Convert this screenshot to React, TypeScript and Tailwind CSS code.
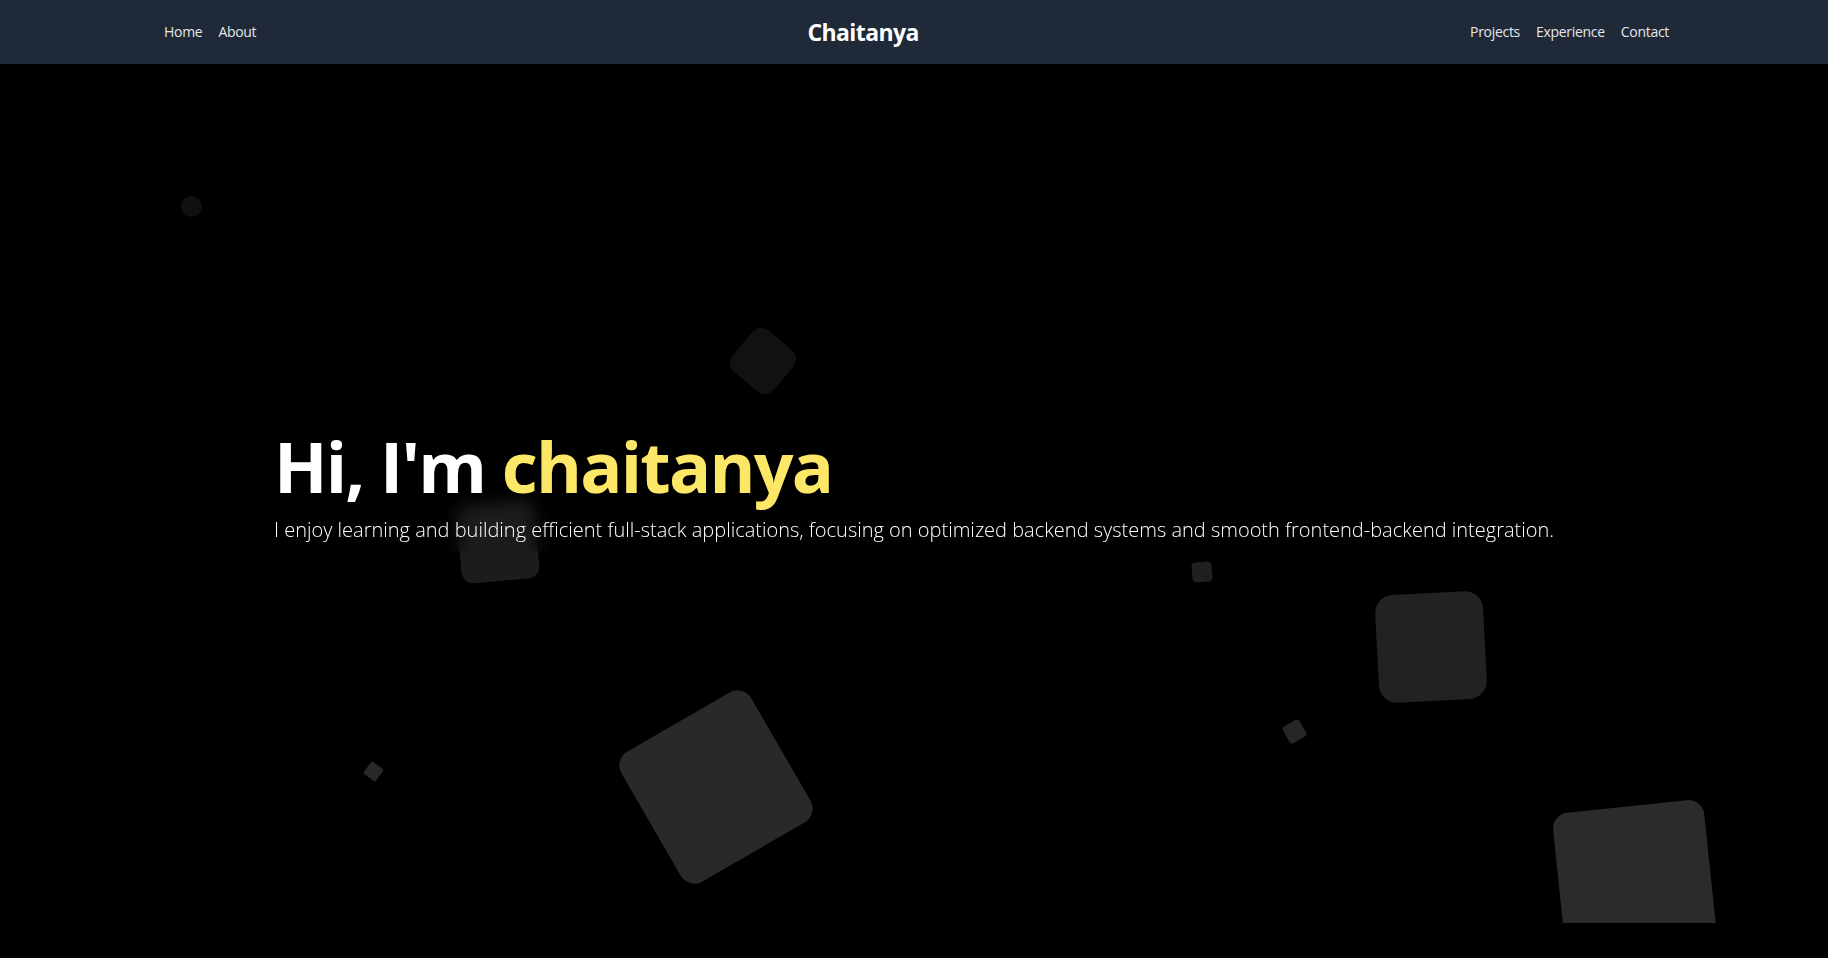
import React from "react";

type Shape = {
  cls: string;
};

// decorative floating squares behind the hero text
const shapes: Shape[] = [
  { cls: "left-[181px] top-[132px] w-[21px] h-[21px] rounded-full bg-[#101010]" },
  { cls: "left-[736px] top-[270px] w-[54px] h-[54px] rounded-[12px] rotate-[40deg] bg-[#111111]" },
  { cls: "left-[459px] top-[439px] w-[78px] h-[78px] rounded-[12px] -rotate-[5deg] bg-[#1c1c1c]" },
  { cls: "left-[1192px] top-[498px] w-[20px] h-[20px] rounded-[4px] -rotate-[5deg] bg-[#202020]" },
  { cls: "left-[1377px] top-[529px] w-[108px] h-[108px] rounded-[18px] -rotate-[3deg] bg-[#222222]" },
  { cls: "left-[1285px] top-[658px] w-[19px] h-[19px] rounded-[3px] -rotate-[30deg] bg-[#262626]" },
  { cls: "left-[1559px] top-[742px] w-[152px] h-[152px] rounded-[16px] -rotate-[6deg] bg-[#2b2b2b]" },
  { cls: "left-[641px] top-[648px] w-[150px] h-[150px] rounded-[16px] -rotate-[30deg] bg-[#292929]" },
  { cls: "left-[366px] top-[700px] w-[15px] h-[15px] rounded-[2px] rotate-[37deg] bg-[#292929]" },
];

const Header: React.FC = () => {
  return (
    <header className="h-16 bg-[#1f2937] flex items-center justify-between pl-[164px] pr-[159px]">
      <nav className="flex gap-4 text-sm tracking-[-0.3px] text-gray-200">
        <a href="#">Home</a>
        <a href="#">About</a>
      </nav>
      <div className="text-[23px] font-bold tracking-tight text-white">Chaitanya</div>
      <nav className="flex gap-4 text-sm tracking-[-0.3px] text-gray-200">
        <a href="#">Projects</a>
        <a href="#">Experience</a>
        <a href="#">Contact</a>
      </nav>
    </header>
  );
};

export default function App() {
  return (
    <div className="min-h-screen bg-black font-['Open_Sans',sans-serif]">
      <Header />

      {/* ── Hero ── */}
      <section className="relative h-[859px] overflow-hidden flex items-center justify-center">
        {shapes.map((s, i) => (
          <div key={i} className={"absolute " + s.cls} />
        ))}

        <div className="relative z-10 mb-[14px] py-2 backdrop-blur-sm">
          <h1 className="text-[70px] leading-[72px] font-bold tracking-[-0.025em] text-white">
            Hi, I'm <span className="text-[#fde767]">chaitanya</span>
          </h1>
          <p className="mt-3.5 text-xl font-light text-white">
            I enjoy learning and building efficient full-stack applications, focusing on optimized backend systems and smooth frontend-backend integration.
          </p>
        </div>
      </section>
    </div>
  );
}
